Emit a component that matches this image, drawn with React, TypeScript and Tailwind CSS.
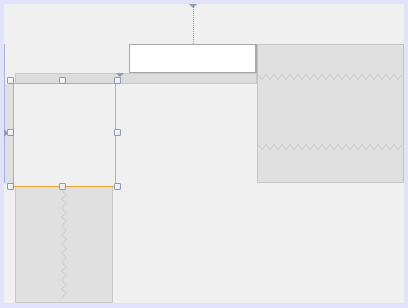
import React from "react";

function zigH(width: number, period: number, amp: number) {
  const pts: string[] = [];
  let i = 0;
  for (let x = 0; x <= width; x += period / 2) {
    pts.push(`${x},${i % 2 === 0 ? 0.5 : amp - 0.5}`);
    i++;
  }
  return pts.join(" ");
}
function zigV(height: number, period: number, amp: number) {
  const pts: string[] = [];
  let i = 0;
  for (let y = 0; y <= height; y += period / 2) {
    pts.push(`${i % 2 === 0 ? 0.5 : amp - 0.5},${y}`);
    i++;
  }
  return pts.join(" ");
}

const handleCls =
  "absolute w-[7px] h-[7px] bg-gradient-to-br from-white to-[#dfe6f2] border border-[#8a9ab8] rounded-[1px]";

export default function App() {
  return (
    <div className="w-[408px] h-[308px] bg-[#e2e2fc] p-[4px] pb-[5px]">
      <div className="relative flex w-full h-full bg-[#f0f0f0] overflow-hidden">
        {/* left ruler line and marker (overlay) */}
        <div className="absolute left-0 top-[40px] w-[1px] h-[139px] bg-[#a8b4dc]" />
        <div className="absolute left-0 top-[125px] w-0 h-0 border-y-[4px] border-y-transparent border-l-[4px] border-l-[#8a9ab8]" />
        {/* top dotted guide and marker (overlay) */}
        <div className="absolute left-[189px] top-0 w-0 h-[40px] border-l border-dotted border-[#8a9ab8]" />
        <div className="absolute left-[185px] top-0 w-0 h-0 border-x-[4px] border-x-transparent border-t-[4px] border-t-[#8a9ab8]" />

        {/* left column */}
        <div className="flex flex-col w-[253px] shrink-0 pt-[40px]">
          <div className="ml-[125px] w-[128px] h-[30px] bg-white border border-[#a8a8a8] border-b-2 border-r-2" />
          <div className="relative ml-[11px] -mt-[1px] w-[242px] h-[11px] bg-[#dcdcdc] border border-[#c8c8c8]">
            <div className="absolute left-[100px] -top-[1px] w-0 h-0 border-x-[4px] border-x-transparent border-t-[4px] border-t-[#8a9ab8]" />
          </div>
          <div className="flex items-start -mt-[1px]">
            <div className="w-[9px] h-[100px] mt-[1px] pl-[1px]">
              <div className="w-[8px] h-full bg-[#e0e0e0]" />
            </div>
            <div className="relative w-[103px] h-[104px] border border-solid border-[#f2a62e] bg-[#f0f0f0] z-10">
              <div className={`${handleCls} -left-[7px] -top-[7px]`} />
              <div className={`${handleCls} left-[45px] -top-[7px]`} />
              <div className={`${handleCls} left-[100px] -top-[7px]`} />
              <div className={`${handleCls} -left-[7px] top-[45px]`} />
              <div className={`${handleCls} left-[100px] top-[45px]`} />
              <div className={`${handleCls} -left-[7px] top-[99px]`} />
              <div className={`${handleCls} left-[45px] top-[99px]`} />
              <div className={`${handleCls} left-[100px] top-[99px]`} />
            </div>
          </div>
          <div className="relative ml-[11px] -mt-[1px] w-[98px] h-[118px] bg-[#e0e0e0] border border-[#c8c8c8] flex justify-center pt-[3px]">
            <svg width="6" height="112">
              <polyline points={zigV(112, 9, 6)} fill="none" stroke="#c8c8c8" strokeWidth="1" />
            </svg>
          </div>
        </div>

        {/* right panel */}
        <div className="mt-[40px] w-[147px] h-[139px] bg-[#e0e0e0] border border-[#c4c4c4] flex flex-col pt-[29px] gap-[64px]">
          <svg width="146" height="6">
            <polyline points={zigH(146, 8, 6)} fill="none" stroke="#c8c8c8" strokeWidth="1" />
          </svg>
          <svg width="146" height="6">
            <polyline points={zigH(146, 8, 6)} fill="none" stroke="#c8c8c8" strokeWidth="1" />
          </svg>
        </div>
      </div>
    </div>
  );
}
